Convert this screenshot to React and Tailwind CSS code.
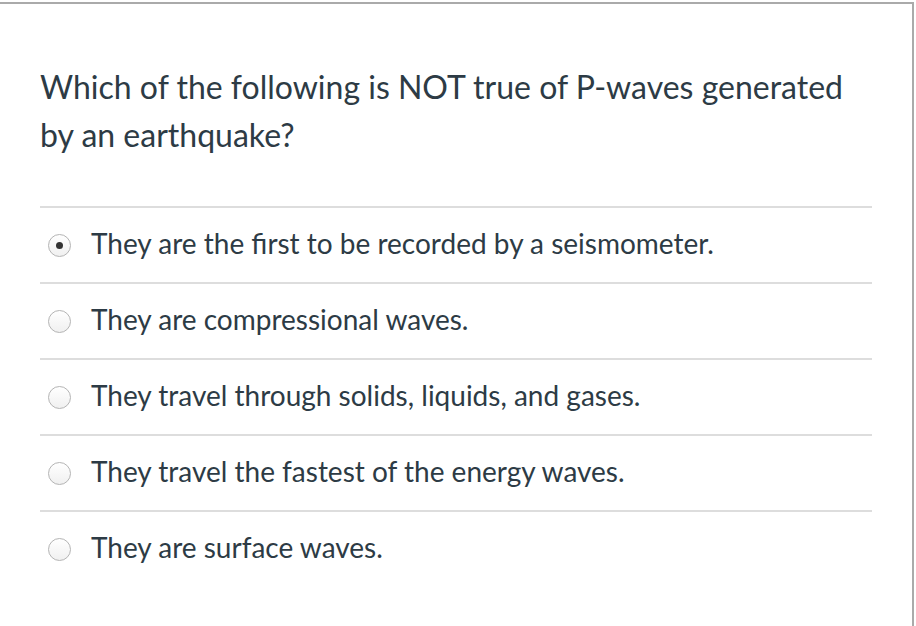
const answers = [
  { text: "They are the first to be recorded by a seismometer.", checked: true },
  { text: "They are compressional waves.", checked: false },
  { text: "They travel through solids, liquids, and gases.", checked: false },
  { text: "They travel the fastest of the energy waves.", checked: false },
  { text: "They are surface waves.", checked: false },
];

function Radio({ checked }) {
  return (
    <span className="flex h-[23px] w-[23px] shrink-0 items-center justify-center rounded-full border border-[#b4b4b4] bg-gradient-to-b from-white to-[#f0f0f0]">
      {checked && <span className="h-[7px] w-[7px] rounded-full bg-[#333]" />}
    </span>
  );
}

export default function App() {
  return (
    <div className="h-[626px] w-[916px] bg-white pt-[2px] font-['Lato',sans-serif] text-[#2d3b45]">
      <div className="h-[624px] w-[914px] border-t-2 border-r-2 border-[#aaaaaa]">
        <div className="px-[40px] pt-[59px] text-[32px] leading-[48px]">
          Which of the following is NOT true of P-waves generated by an earthquake?
        </div>
        <div className="mx-[40px] mt-[47px]">
          {answers.map((a) => (
            <div key={a.text} className="flex h-[76px] items-center border-t-2 border-[#dddddd] pl-[8px]">
              <Radio checked={a.checked} />
              <span className="ml-[20px] pb-[4px] text-[28px]">{a.text}</span>
            </div>
          ))}
        </div>
      </div>
    </div>
  );
}
